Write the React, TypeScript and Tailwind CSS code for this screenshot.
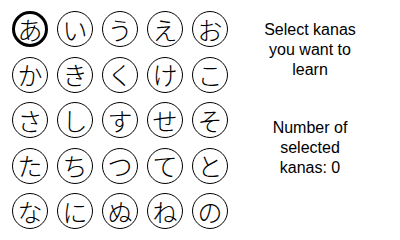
import { useState } from "react";

const kanas = [
  "あ", "い", "う", "え", "お",
  "か", "き", "く", "け", "こ",
  "さ", "し", "す", "せ", "そ",
  "た", "ち", "つ", "て", "と",
  "な", "に", "ぬ", "ね", "の",
];

export default function App() {
  const [cursor, setCursor] = useState(0);
  const [selected, setSelected] = useState<number[]>([]);

  const toggle = (i: number) => {
    setCursor(i);
    setSelected((s) => (s.includes(i) ? s.filter((x) => x !== i) : [...s, i]));
  };

  return (
    <div className="flex w-[400px] h-[240px] bg-white text-black overflow-hidden">
      <div className="grid grid-cols-[repeat(5,36px)] auto-rows-[36px] gap-x-[9px] gap-y-[9.5px] pl-[12px] pt-[11px] w-[228px] shrink-0">
        {kanas.map((k, i) => (
          <button
            key={k}
            onClick={() => toggle(i)}
            className={
              "box-border w-[36px] h-[36px] rounded-full border-black flex items-center justify-center text-[25px] leading-none font-light font-['Noto_Sans_CJK_JP',sans-serif] " +
              (cursor === i ? "border-[3px]" : "border") +
              (selected.includes(i) ? " bg-gray-300" : "")
            }
          >
            {k}
          </button>
        ))}
      </div>
      <div className="w-[164px] flex flex-col items-center text-center font-['Liberation_Sans',sans-serif] text-[16px] leading-[20px] pt-[20px]">
        <p>
          Select kanas
          <br />
          you want to
          <br />
          learn
        </p>
        <p className="mt-[38px]">
          Number of
          <br />
          selected
          <br />
          kanas: {selected.length}
        </p>
      </div>
    </div>
  );
}
